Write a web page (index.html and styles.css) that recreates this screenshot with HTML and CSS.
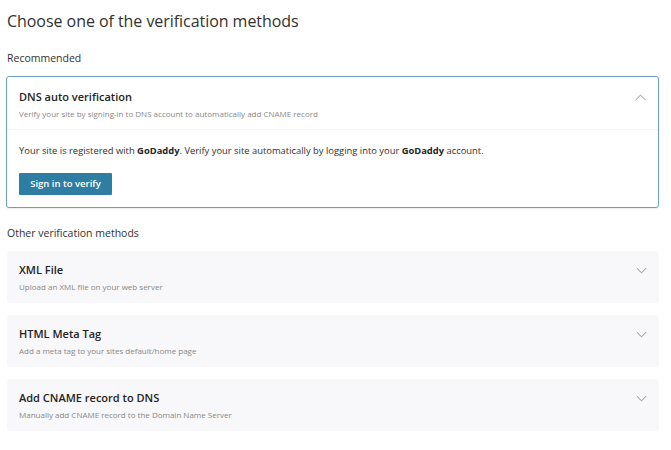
FILE: index.html
```html
<!DOCTYPE html>
<html lang="en">
<head>
<meta charset="utf-8">
<title>Verify site ownership</title>
<link rel="stylesheet" href="styles.css">
</head>
<body>
<main class="page">
  <h1 class="title">Choose one of the verification methods</h1>

  <h2 class="group-label">Recommended</h2>
  <section class="method method--open">
    <header class="method-head">
      <div class="method-text">
        <div class="method-name">DNS auto verification</div>
        <div class="method-desc">Verify your site by signing-in to DNS account to automatically add CNAME record</div>
      </div>
      <svg class="chevron" viewBox="0 0 14 8" aria-hidden="true"><path d="M1 7 L7 1 L13 7"/></svg>
    </header>
    <div class="method-body">
      <p class="body-text">Your site is registered with <b>GoDaddy</b>. Verify your site automatically by logging into your <b>GoDaddy</b> account.</p>
      <button class="btn-primary" type="button">Sign in to verify</button>
    </div>
  </section>

  <h2 class="group-label group-label--other">Other verification methods</h2>
  <div class="method-list">
    <section class="method method--closed">
      <header class="method-head">
        <div class="method-text">
          <div class="method-name">XML File</div>
          <div class="method-desc">Upload an XML file on your web server</div>
        </div>
        <svg class="chevron" viewBox="0 0 14 8" aria-hidden="true"><path d="M1 1 L7 7 L13 1"/></svg>
      </header>
    </section>
    <section class="method method--closed">
      <header class="method-head">
        <div class="method-text">
          <div class="method-name">HTML Meta Tag</div>
          <div class="method-desc">Add a meta tag to your sites default/home page</div>
        </div>
        <svg class="chevron" viewBox="0 0 14 8" aria-hidden="true"><path d="M1 1 L7 7 L13 1"/></svg>
      </header>
    </section>
    <section class="method method--closed">
      <header class="method-head">
        <div class="method-text">
          <div class="method-name">Add CNAME record to DNS</div>
          <div class="method-desc">Manually add CNAME record to the Domain Name Server</div>
        </div>
        <svg class="chevron" viewBox="0 0 14 8" aria-hidden="true"><path d="M1 1 L7 7 L13 1"/></svg>
      </header>
    </section>
  </div>
</main>
</body>
</html>
```

FILE: styles.css
```css
html, body {
  margin: 0;
  padding: 0;
  background: #ffffff;
}

body {
  font-family: "Open Sans", "Noto Sans", sans-serif;
  color: #323130;
}

.page {
  width: 652px;
  padding: 9px 0 0 7px;
}

.title {
  margin: 0;
  font-size: 16px;
  font-weight: 400;
  line-height: 24px;
  color: #323130;
  letter-spacing: -0.05px;
}

.group-label {
  margin: 18px 0 0;
  font-size: 10.5px;
  font-weight: 400;
  line-height: 14px;
  color: #323130;
}

.method {
  border-radius: 3px;
}

.method--open {
  margin-top: 11px;
  margin-left: -1px;
  border: 1px solid #6e9fbd;
  background: #fff;
  box-shadow: 0 1px 2px rgba(0, 0, 0, 0.08);
}

.method-head {
  display: flex;
  align-items: flex-start;
  justify-content: space-between;
  padding: 12px 12px 0 12px;
}

.method-name {
  font-size: 11px;
  font-weight: 600;
  line-height: 16px;
  color: #252423;
}

.method-desc {
  margin-top: 3px;
  font-size: 8px;
  line-height: 11px;
  color: #8a8886;
}

.chevron {
  width: 11px;
  height: 7px;
  margin-top: 5px;
  fill: none;
  stroke: #8a8886;
  stroke-width: 1.2;
}

.method--open .method-head {
  padding-bottom: 10px;
  border-bottom: 1px solid #f3f2f1;
}

.method-body {
  padding: 14px 12px 12px 12px;
}

.body-text {
  margin: 0;
  font-size: 9.4px;
  line-height: 13px;
  color: #323130;
}

.body-text b {
  font-weight: 700;
  color: #252423;
}

.btn-primary {
  display: block;
  margin-top: 16px;
  width: 93px;
  height: 22px;
  padding: 0;
  border: 0;
  border-radius: 1px;
  background: #2e7ea4;
  color: #ffffff;
  font-family: inherit;
  font-size: 9.5px;
  font-weight: 600;
  line-height: 22px;
  text-align: center;
}

.method-list {
  display: flex;
  flex-direction: column;
  gap: 12px;
  margin-top: 11px;
}

.method--closed {
  height: 52px;
  box-sizing: border-box;
  background: #f8f7f9;
}

.method--closed .method-head {
  padding-top: 11px;
}
```
